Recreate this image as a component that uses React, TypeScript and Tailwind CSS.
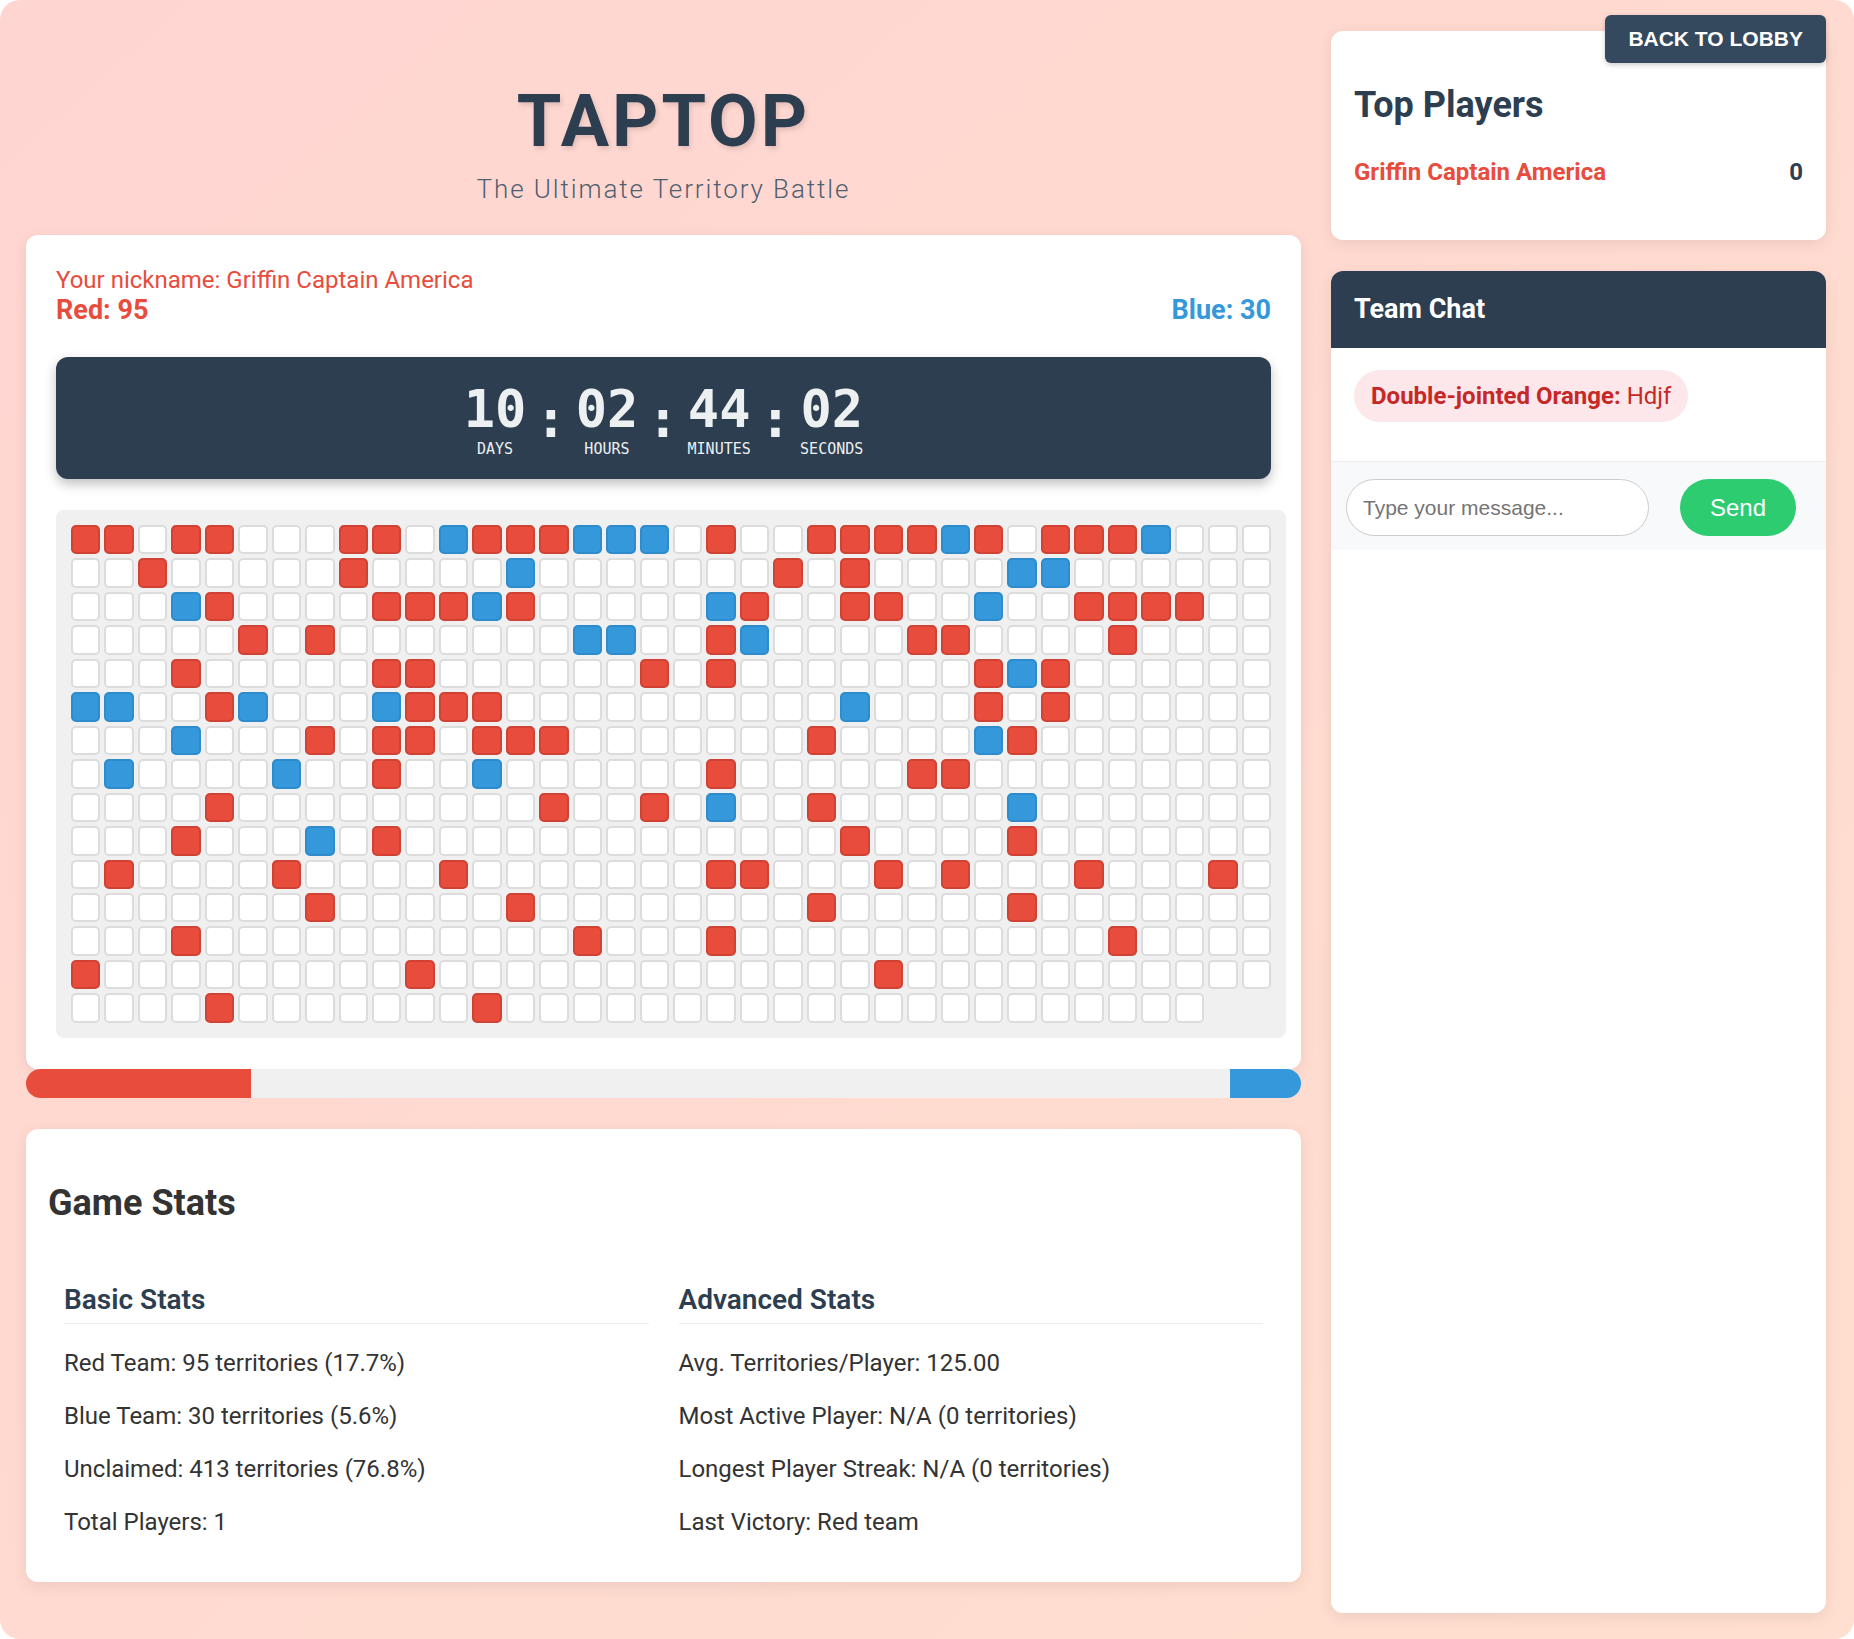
import React from 'react';

// territory layout: per row, the column indexes owned by each team
const RED_CELLS: number[][] = [
  [0, 1, 3, 4, 8, 9, 12, 13, 14, 19, 22, 23, 24, 25, 27, 29, 30, 31],
  [2, 8, 21, 23],
  [4, 9, 10, 11, 13, 20, 23, 24, 30, 31, 32, 33],
  [5, 7, 19, 25, 26, 31],
  [3, 9, 10, 17, 19, 27, 29],
  [4, 10, 11, 12, 27, 29],
  [7, 9, 10, 12, 13, 14, 22, 28],
  [9, 19, 25, 26],
  [4, 14, 17, 22],
  [3, 9, 23, 28],
  [1, 6, 11, 19, 20, 24, 26, 30, 34],
  [7, 13, 22, 28],
  [3, 15, 19, 31],
  [0, 10, 24],
  [4, 12],
];

const BLUE_CELLS: number[][] = [
  [11, 15, 16, 17, 26, 32],
  [13, 28, 29],
  [3, 12, 19, 27],
  [15, 16, 20],
  [28],
  [0, 1, 5, 9, 23],
  [3, 27],
  [1, 6, 12],
  [19, 28],
  [7],
  [], [], [], [], [],
];

const COLS = 36;
const TOTAL = 538;

type Owner = 'red' | 'blue' | null;

function buildCells(): Owner[] {
  const cells: Owner[] = [];
  for (let i = 0; i < TOTAL; i++) {
    const row = Math.floor(i / COLS);
    const col = i % COLS;
    if (RED_CELLS[row]?.includes(col)) cells.push('red');
    else if (BLUE_CELLS[row]?.includes(col)) cells.push('blue');
    else cells.push(null);
  }
  return cells;
}

const mono = "font-['DejaVu_Sans_Mono','Liberation_Mono',monospace]";

function TimeUnit({ value, label }: { value: string; label: string }) {
  return (
    <div className="flex flex-col items-center">
      <span className={`${mono} text-[52px] font-bold leading-none text-[#ecf0f1]`}>{value}</span>
      <span className={`${mono} mt-[7px] text-[15px] leading-none text-[#ecf0f1]`}>{label}</span>
    </div>
  );
}

function Colon() {
  return (
    <span className={`${mono} mx-[9px] mt-[10px] text-[52px] font-bold leading-none text-[#ecf0f1]`}>:</span>
  );
}

function Cell({ owner }: { owner: Owner }) {
  if (owner === 'red') {
    return <div className="aspect-square rounded-[5px] border-2 border-[#cf4234] bg-[#e74c3c]" />;
  }
  if (owner === 'blue') {
    return <div className="aspect-square rounded-[5px] border-2 border-[#2f8ccc] bg-[#3498db]" />;
  }
  return <div className="aspect-square rounded-[5px] border-2 border-[#dcdcdc] bg-white" />;
}

export default function App() {
  const cells = buildCells();
  const red = cells.filter((c) => c === 'red').length;
  const blue = cells.filter((c) => c === 'blue').length;
  const redPct = (red / TOTAL) * 100;
  const bluePct = (blue / TOTAL) * 100;

  return (
    <div className="min-h-screen bg-white font-['Roboto','Noto_Sans',sans-serif]">
      <div className="flex min-h-screen gap-[30px] rounded-[20px] bg-linear-to-br from-[#ffd5d1] to-[#ffdfcf] pl-[26px] pr-[28px] pt-[31px] pb-[26px]">
        {/* Colonne principale */}
        <main className="flex w-[1275px] flex-col">
          <header className="flex flex-col items-center pt-[55px]">
            <h1 className="text-[72px] font-bold leading-none tracking-[3px] text-[#2c3e50] [text-shadow:2px_3px_5px_rgba(0,0,0,0.12)]">
              TAPTOP
            </h1>
            <p className="mt-[18px] text-[26px] font-light leading-none tracking-[1.9px] text-[#4f5f70]">
              The Ultimate Territory Battle
            </p>
          </header>

          <section className="mt-[33px] rounded-xl bg-white px-[30px] pt-[30px] pb-[31px] shadow-[0_4px_15px_rgba(0,0,0,0.08)]">
            <div className="flex items-end justify-between">
              <div>
                <div className="text-[24px] leading-[30px] text-[#e74c3c]">Your nickname: Griffin Captain America</div>
                <div className="text-[27px] font-bold leading-[30px] text-[#e74c3c]">Red: {red}</div>
              </div>
              <div className="text-[27px] font-bold leading-[30px] text-[#3498db]">Blue: {blue}</div>
            </div>

            <div className="mt-[32px] flex items-start justify-center rounded-xl bg-[#2c3e50] pt-[26px] pb-[22px] shadow-[0_5px_12px_rgba(0,0,0,0.25)]">
              <TimeUnit value="10" label="DAYS" />
              <Colon />
              <TimeUnit value="02" label="HOURS" />
              <Colon />
              <TimeUnit value="44" label="MINUTES" />
              <Colon />
              <TimeUnit value="02" label="SECONDS" />
            </div>

            <div className="mt-[31px] w-[1230px] rounded-lg bg-[#f0f0f0] p-[15px]">
              <div className="grid w-[1200px] grid-cols-[repeat(36,minmax(0,1fr))] gap-[4px]">
                {cells.map((owner, i) => (
                  <Cell key={i} owner={owner} />
                ))}
              </div>
            </div>
          </section>

          {/* Barre de progression */}
          <div className="flex h-[29px] justify-between overflow-hidden rounded-full bg-[#f0f0f0]">
            <div className="h-full bg-[#e74c3c]" style={{ width: `${redPct}%` }} />
            <div className="h-full bg-[#3498db]" style={{ width: `${bluePct}%` }} />
          </div>

          <section className="mt-[31px] rounded-xl bg-white px-[22px] pt-[56px] pb-[48px] shadow-[0_4px_15px_rgba(0,0,0,0.08)]">
            <h2 className="text-[36px] font-bold leading-none text-[#333333]">Game Stats</h2>
            <div className="mt-[65px] grid grid-cols-2 gap-[30px] px-[16px]">
              <div>
                <h3 className="border-b border-[#eeeeee] pb-[9px] text-[28px] font-semibold leading-none text-[#2c3e50]">Basic Stats</h3>
                <div className="mt-[27px] flex flex-col gap-[29px] text-[24px] leading-none text-[#333333]">
                  <p>Red Team: {red} territories ({redPct.toFixed(1)}%)</p>
                  <p>Blue Team: {blue} territories ({bluePct.toFixed(1)}%)</p>
                  <p>Unclaimed: {TOTAL - red - blue} territories ({(100 - redPct - bluePct).toFixed(1)}%)</p>
                  <p>Total Players: 1</p>
                </div>
              </div>
              <div>
                <h3 className="border-b border-[#eeeeee] pb-[9px] text-[28px] font-semibold leading-none text-[#2c3e50]">Advanced Stats</h3>
                <div className="mt-[27px] flex flex-col gap-[29px] text-[24px] leading-none text-[#333333]">
                  <p>Avg. Territories/Player: 125.00</p>
                  <p>Most Active Player: N/A (0 territories)</p>
                  <p>Longest Player Streak: N/A (0 territories)</p>
                  <p>Last Victory: Red team</p>
                </div>
              </div>
            </div>
          </section>
        </main>

        {/* Barre latérale */}
        <aside className="relative flex w-[495px] flex-col gap-[31px]">
          <button className="absolute top-[-16px] right-0 z-10 flex h-[48px] items-center rounded-md bg-[#34495e] px-[23px] font-['Liberation_Sans',Arial,sans-serif] text-[21px] font-bold text-white shadow-[0_2px_5px_rgba(0,0,0,0.2)]">
            BACK TO LOBBY
          </button>

          <div className="rounded-xl bg-white px-[23px] pt-[56px] pb-[56px] shadow-[0_4px_15px_rgba(0,0,0,0.08)]">
            <h2 className="text-[36px] font-bold leading-none text-[#2c3e50]">Top Players</h2>
            <div className="mt-[37px] flex items-center justify-between text-[24px] font-bold leading-none">
              <span className="text-[#e74c3c]">Griffin Captain America</span>
              <span className="text-[#2c3e50]">0</span>
            </div>
          </div>

          <div className="flex flex-1 flex-col overflow-hidden rounded-xl bg-white shadow-[0_4px_15px_rgba(0,0,0,0.08)]">
            <div className="bg-[#2c3e50] px-[23px] py-[25px]">
              <h2 className="text-[27px] font-bold leading-none text-white">Team Chat</h2>
            </div>
            <div className="h-[113px] px-[23px] pt-[22px]">
              <div className="inline-flex h-[52px] items-center rounded-full bg-[#fde7ea] px-[17px] text-[24px] leading-none text-[#c62828]">
                <span className="font-bold">Double-jointed Orange:</span>
                <span>&nbsp;Hdjf</span>
              </div>
            </div>
            <div className="flex items-center border-t border-[#eeeeee] bg-[#f8f9fa] px-[15px] pt-[17px] pb-[14px]">
              <input
                type="text"
                placeholder="Type your message..."
                className="h-[57px] w-[303px] rounded-full border border-[#cccccc] bg-white px-[16px] font-['Liberation_Sans',Arial,sans-serif] text-[21px] text-[#333] outline-none placeholder:text-[#757575]"
              />
              <button className="ml-[31px] h-[57px] w-[116px] rounded-full bg-[#2ecc71] font-['Liberation_Sans',Arial,sans-serif] text-[24px] text-white">
                Send
              </button>
            </div>
            <div className="flex-1" />
          </div>
        </aside>
      </div>
    </div>
  );
}
